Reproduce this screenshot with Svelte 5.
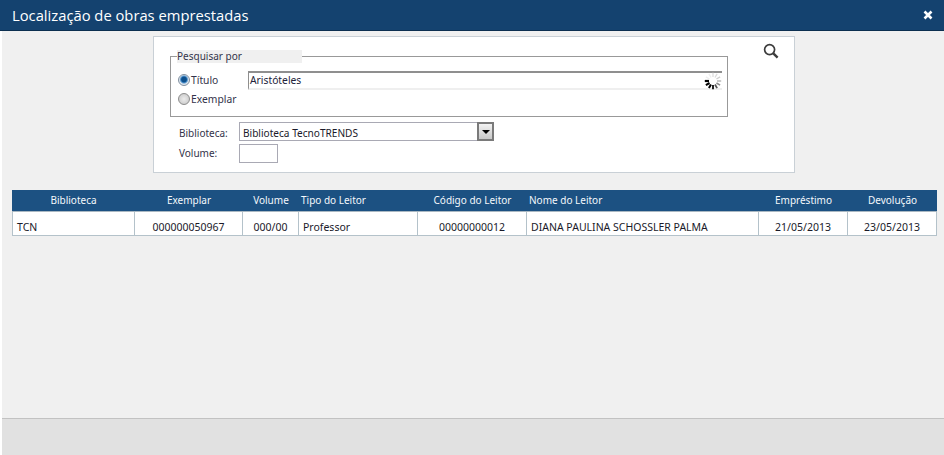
<script>
  const columns = [
    { label: 'Biblioteca', width: 123, head: 'center', value: 'TCN', cell: 'left' },
    { label: 'Exemplar', width: 108, head: 'center', value: '000000050967', cell: 'center' },
    { label: 'Volume', width: 56, head: 'center', value: '000/00', cell: 'center' },
    { label: 'Tipo do Leitor', width: 119, head: 'left', value: 'Professor', cell: 'left' },
    { label: 'Código do Leitor', width: 109, head: 'center', value: '00000000012', cell: 'center' },
    { label: 'Nome do Leitor', width: 232, head: 'left', value: 'DIANA PAULINA SCHOSSLER PALMA', cell: 'left' },
    { label: 'Empréstimo', width: 89, head: 'center', value: '21/05/2013', cell: 'center' },
    { label: 'Devolução', width: 89, head: 'center', value: '23/05/2013', cell: 'center' }
  ];
  const spokes = [
    [0, '#dedede', 1.3], [30, '#dcdcdc', 1.3], [60, '#cfcfcf', 1.3], [90, '#b5b5b5', 1.4],
    [120, '#8a8a8a', 1.6], [150, '#555', 1.8], [180, '#222', 2], [210, '#000', 2],
    [240, '#000', 2.2], [270, '#000', 2.2], [300, '#eee', 1.3], [330, '#eee', 1.3]
  ];
</script>

<div class="page">
  <header class="title">
    <h1>Localização de obras emprestadas</h1>
    <svg class="close" viewBox="0 0 10 10" width="10" height="10" aria-label="Fechar">
      <path d="M1.5 1.5 8.5 8.5M8.5 1.5 1.5 8.5" stroke="#fff" stroke-width="2.6" fill="none" />
    </svg>
  </header>

  <main class="content">
    <section class="panel">
      <div class="search-row">
        <fieldset class="group">
          <legend>Pesquisar por</legend>
          <div class="options">
            <div class="radios">
              <label class="radio"><span class="dot on"></span>Título</label>
              <label class="radio"><span class="dot"></span>Exemplar</label>
            </div>
            <div class="term">
              <span class="term-text">Aristóteles</span>
              <svg viewBox="0 0 18 18" width="18" height="18" class="spinner">
                {#each spokes as [a, color, w]}
                  <line x1="9" y1="5" x2="9" y2="0.8" stroke={color} stroke-width={w} transform="rotate({a} 9 9)" />
                {/each}
              </svg>
            </div>
          </div>
        </fieldset>
        <svg class="search" viewBox="0 0 16 16" width="16" height="16" aria-label="Pesquisar">
          <circle cx="6.6" cy="6.6" r="5" fill="none" stroke="#3c3c3c" stroke-width="1.7" />
          <path d="M10.3 10.3 14.6 14.6" stroke="#3c3c3c" stroke-width="2.4" fill="none" />
        </svg>
      </div>
      <div class="field">
        <span class="name lower">Biblioteca:</span>
        <div class="select">
          <span class="lower">Biblioteca TecnoTRENDS</span>
          <span class="arrow"><i></i></span>
        </div>
      </div>
      <div class="field second">
        <span class="name upper">Volume:</span>
        <div class="volume"></div>
      </div>
    </section>

    <table>
      <colgroup>
        {#each columns as c}<col style="width:{c.width}px" />{/each}
      </colgroup>
      <thead>
        <tr>
          {#each columns as c}<th class={c.head}>{c.label}</th>{/each}
        </tr>
      </thead>
      <tbody>
        <tr>
          {#each columns as c}<td class={c.cell}>{c.value}</td>{/each}
        </tr>
      </tbody>
    </table>
  </main>

  <footer class="foot"></footer>
</div>

<style>
  :global(body) {
    margin: 0;
    background: #fff;
  }
  .page {
    width: 944px;
    height: 455px;
    display: flex;
    flex-direction: column;
    overflow: hidden;
    font-family: "Noto Sans", "DejaVu Sans", sans-serif;
    font-size: 10.3px;
    color: #1a1a2a;
  }
  .title {
    height: 30px;
    flex: none;
    background: #14426f;
    border-bottom: 1px solid #0c2f50;
    display: flex;
    align-items: center;
    justify-content: space-between;
    padding: 0 11px 0 12px;
  }
  h1 {
    margin: 0;
    font-family: "Open Sans", sans-serif;
    font-weight: 400;
    font-size: 14.75px;
    color: #fff;
  }
  .close {
    display: block;
  }
  .content {
    flex: 1;
    margin-left: 2px;
    background: #f0f0f0;
    padding: 5px 7px 0 10px;
    display: flex;
    flex-direction: column;
  }
  .panel {
    box-sizing: border-box;
    width: 642px;
    height: 137px;
    margin-left: 141px;
    background: #fff;
    border: 1px solid #c9d0d6;
    padding: 13px 0 0 16px;
  }
  .search-row {
    display: flex;
    align-items: flex-start;
  }
  .group {
    box-sizing: border-box;
    width: 558px;
    height: 67px;
    margin: 0;
    border: 1px solid #999;
    padding: 0 5px 0 7px;
    min-width: 0;
  }
  legend {
    width: 125px;
    box-sizing: border-box;
    padding: 0;
    margin-left: -1px;
    height: 13px;
    line-height: 13px;
    font-size: 10px;
    background: #f0f0f0;
    color: #33334a;
  }
  .options {
    display: flex;
    margin-top: 8px;
  }
  .radios {
    width: 70px;
    flex: none;
    display: flex;
    flex-direction: column;
    gap: 6px;
    padding-top: 2px;
  }
  .radio {
    display: flex;
    align-items: center;
    height: 13px;
    color: #33334a;
  }
  .dot {
    box-sizing: border-box;
    width: 12px;
    height: 12px;
    margin-right: 1px;
    border-radius: 50%;
    border: 1px solid #8c8c8c;
    background: radial-gradient(circle at 50% 50%, #ececec, #c4c4c4);
  }
  .dot.on {
    border-color: #7f8f9f;
    background: radial-gradient(circle at 50% 45%, #0c4f8c 0 2.4px, #3f86c4 3.2px, #dfe6ee 4.6px);
  }
  .term {
    box-sizing: border-box;
    width: 474px;
    height: 19px;
    background: #fff;
    border-top: 2px solid #8f8f8f;
    border-left: 1px solid #8f8f8f;
    border-bottom: 2px solid #efefef;
    display: flex;
    align-items: center;
    justify-content: space-between;
    padding: 0 0 0 1px;
    color: #22223a;
  }
  .term-text {
    padding-bottom: 2px;
  }
  .spinner {
    flex: none;
  }
  .search {
    margin: -7px 0 0 35px;
    flex: none;
  }
  .field {
    display: flex;
    align-items: center;
    margin-top: 5px;
    padding-left: 9px;
  }
  .second {
    margin-top: 3px;
  }
  .name {
    width: 60px;
    flex: none;
    font-size: 10px;
    color: #33334a;
  }
  .lower {
    padding-top: 2px;
  }
  .upper {
    padding-bottom: 2px;
  }
  .select {
    box-sizing: border-box;
    width: 255px;
    height: 19px;
    border: 1px solid #a9a9b4;
    font-size: 10.1px;
    display: flex;
    align-items: center;
    justify-content: space-between;
    padding-left: 3px;
  }
  .arrow {
    box-sizing: border-box;
    width: 17px;
    height: 19px;
    margin-right: -1px;
    border: 2px solid #7a7a7a;
    background: linear-gradient(#f2f2f2, #c8c8c8);
    display: flex;
    align-items: center;
    justify-content: center;
  }
  .arrow i {
    border: 4px solid transparent;
    border-top: 4px solid #000;
    border-bottom: 0;
  }
  .volume {
    box-sizing: border-box;
    width: 39px;
    height: 19px;
    border: 1px solid #a9a9b4;
  }
  table {
    width: 925px;
    table-layout: fixed;
    border-collapse: separate;
    border-spacing: 0;
    margin-top: 17px;
  }
  th {
    box-sizing: border-box;
    height: 22px;
    padding: 0 0 2px;
    background: #1c5182;
    color: #f4f8fc;
    font-weight: 400;
    font-size: 10px;
    border-bottom: 1px solid #aab8c2;
  }
  td {
    box-sizing: border-box;
    height: 24px;
    padding: 6px 0 0 0;
    background: #fff;
    font-size: 10.5px;
    border-right: 1px solid #b4c2ca;
    border-bottom: 1px solid #b4c2ca;
    white-space: nowrap;
    overflow: hidden;
  }
  td:first-child {
    border-left: 1px solid #b4c2ca;
  }
  .center {
    text-align: center;
  }
  th.left {
    text-align: left;
    padding-left: 2px;
  }
  td.left {
    text-align: left;
    padding-left: 4px;
  }
  .foot {
    height: 36px;
    flex: none;
    margin-left: 2px;
    background: #e1e1e1;
    border-top: 1px solid #c2c2c2;
  }
</style>
